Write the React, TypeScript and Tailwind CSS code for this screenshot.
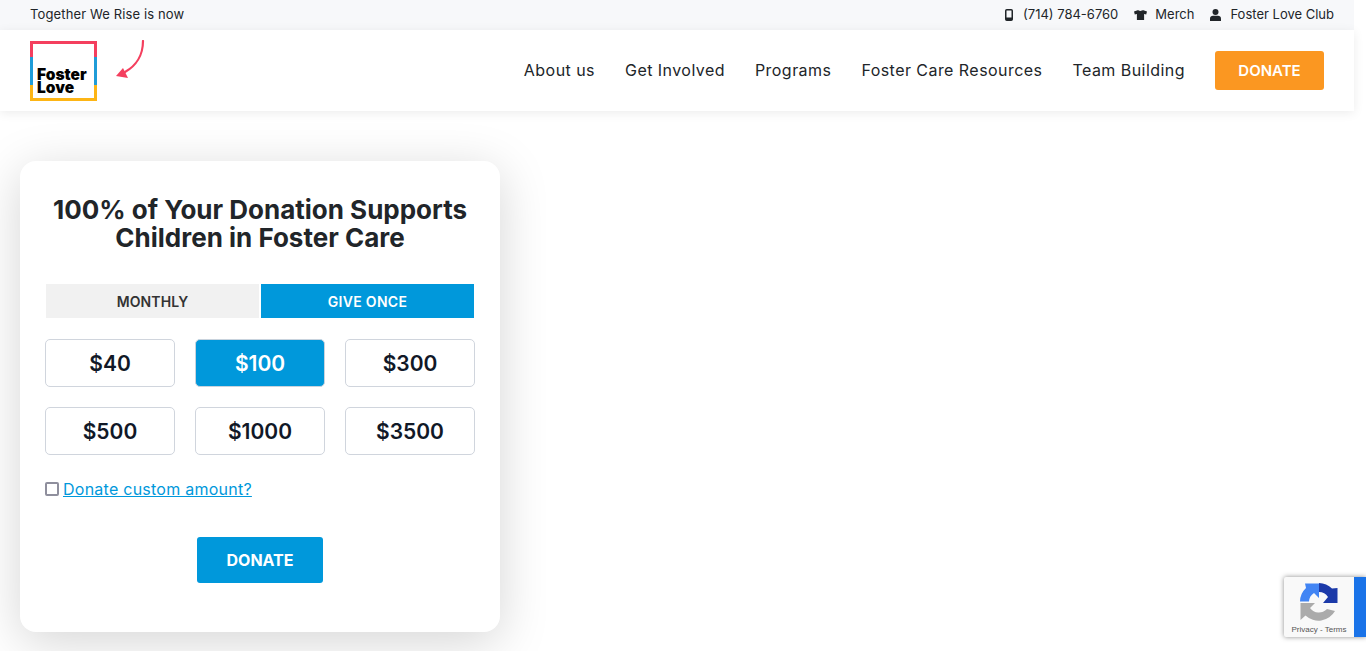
// Foster Love donation page

const navLinks = ['About us', 'Get Involved', 'Programs', 'Foster Care Resources', 'Team Building'];
const amounts = ['$40', '$100', '$300', '$500', '$1000', '$3500'];

function Logo() {
  return (
    <div className="relative w-[67px] h-[60px] flex flex-col justify-end pl-[7px] pb-[7px] bg-white">
      <span className="absolute left-0 top-0 w-full h-[16px] border-[3px] border-b-0 border-[#f43f5e]" />
      <span className="absolute left-0 top-[16px] w-full h-[28px] border-x-[3px] border-[#1f9cd8]" />
      <span className="absolute left-0 bottom-0 w-full h-[16px] border-[3px] border-t-0 border-[#fdb515]" />
      <p className="font-['Inter',sans-serif] font-black text-[15.5px] leading-[13px] text-black">
        Foster
        <br />
        Love
      </p>
    </div>
  );
}

function Arrow() {
  return (
    <svg width="32" height="40" viewBox="0 0 32 40" fill="none" className="ml-[17px] mt-[-1px] self-start">
      <path d="M29 1C29 15 22 26 11 32" stroke="#f43f5e" strokeWidth="2.2" strokeLinecap="round" />
      <path d="M2 36L9 28L14 38Z" fill="#f43f5e" />
    </svg>
  );
}

function PhoneIcon() {
  return (
    <svg width="8" height="12" viewBox="0 0 8 12" fill="none">
      <rect x="0.75" y="0.75" width="6.5" height="10.5" rx="1" stroke="#212529" strokeWidth="1.5" />
      <rect x="1" y="8.5" width="6" height="2.5" fill="#212529" />
    </svg>
  );
}

function ShirtIcon() {
  return (
    <svg width="13" height="10" viewBox="0 0 13 10" fill="#212529">
      <path d="M4.3 0L0 1.6L0.8 4.4L2.9 4V10H10.1V4L12.2 4.4L13 1.6L8.7 0C8.2 1.2 4.8 1.2 4.3 0Z" />
    </svg>
  );
}

function UserIcon() {
  return (
    <svg width="11" height="12" viewBox="0 0 11 12" fill="#212529">
      <circle cx="5.5" cy="3" r="3" />
      <path d="M0 12V9.5C0 7.8 1.3 6.8 3 6.8H8C9.7 6.8 11 7.8 11 9.5V12Z" />
    </svg>
  );
}

function RecaptchaMark() {
  return (
    <svg width="38" height="38" viewBox="0 0 38 38">
      <path d="M19 0A19 19 0 0 1 32 5.5L37.5 5V20H23L28 14A11 11 0 0 0 19 9Z" fill="#1c3aa9" />
      <path d="M0 18.5A19 19 0 0 1 6 5L5 0.5H19V15L14 10A11 11 0 0 0 9 18.5Z" fill="#4285f4" />
      <path d="M35 28A19 19 0 0 1 5.5 32.5L0.5 37V20H15L10 25A11 11 0 0 0 27 26Z" fill="#ababab" />
    </svg>
  );
}

function RecaptchaBadge() {
  return (
    <div className="absolute right-0 top-[577px] w-[82px] h-[60px] flex rounded-l-[2px] shadow-[0_0_5px_rgba(128,128,128,0.9)] bg-[#f9f9f9] overflow-hidden">
      <div className="w-[70px] flex flex-col items-center pt-[6px]">
        <RecaptchaMark />
        <span className="font-['Liberation_Sans',sans-serif] text-[8px] leading-[10px] mt-[4px] text-[#555]">Privacy - Terms</span>
      </div>
      <div className="w-[12px] bg-[#1a73e8]" />
    </div>
  );
}

export default function App() {
  return (
    <div className="relative h-[651px] overflow-hidden bg-white font-['Inter',sans-serif] text-[#212529]">
      <div className="w-[1354px]">
        {/* Top bar */}
        <div className="h-[30px] bg-[#f7f8fa] pl-[30px] pr-[20px] flex items-center justify-between text-[13px]">
          <span className="tracking-[0.13px]">Together We Rise is now</span>
          <div className="flex items-center gap-4">
            <span className="flex items-center gap-[10px]">
              <PhoneIcon />
              (714) 784-6760
            </span>
            <span className="flex items-center gap-2">
              <ShirtIcon />
              Merch
            </span>
            <span className="flex items-center gap-[9px]">
              <UserIcon />
              Foster Love Club
            </span>
          </div>
        </div>

        {/* Main nav */}
        <div className="h-[81px] px-[30px] flex items-center justify-between shadow-[0_2px_10px_rgba(0,0,0,0.08)]">
          <div className="flex items-center">
            <Logo />
            <Arrow />
          </div>
          <div className="flex items-center gap-[30px] text-[16px] tracking-[0.45px]">
            {navLinks.map((link) => (
              <span key={link} className="mb-[2px]">{link}</span>
            ))}
            <button className="w-[109px] h-[39px] pt-[2px] bg-[#fb9721] rounded-[3px] text-white font-semibold text-[15px] tracking-normal">
              DONATE
            </button>
          </div>
        </div>

        {/* Donation card, its shadow is cut off by the column */}
        <div className="w-[546px] h-[540px] overflow-hidden pl-[20px] pt-[50px]">
          <div className="w-[480px] h-[471px] bg-white rounded-[16px] shadow-[0_10px_50px_rgba(0,0,0,0.17)] px-[25px] pt-[35px]">
            <h1 className="text-[26px] leading-[28px] font-bold text-center text-[#212529]">
              100% of Your Donation Supports Children in Foster Care
            </h1>

            <div className="mt-[32px] flex gap-[2px] pl-[1px] pr-[1px]">
              <div className="flex-1 h-[34px] bg-[#f1f1f1] flex items-center justify-center text-[14px] font-semibold tracking-[0.1px] text-[#333]">
                MONTHLY
              </div>
              <div className="flex-1 h-[34px] bg-[#0098db] flex items-center justify-center text-[14px] font-semibold tracking-[0.3px] text-white">
                GIVE ONCE
              </div>
            </div>

            <div className="mt-[21px] grid grid-cols-3 gap-x-[20px] gap-y-[20px]">
              {amounts.map((amount) => (
                <button
                  key={amount}
                  className={
                    amount === '$100'
                      ? 'h-[48px] pt-[2px] rounded-[5px] border border-[#c9d3dd] bg-[#0098db] text-white text-[21px] font-semibold'
                      : 'h-[48px] pt-[2px] rounded-[5px] border border-[#d0d5dd] bg-white text-[#111827] text-[21px] font-semibold'
                  }
                >
                  {amount}
                </button>
              ))}
            </div>

            <div className="mt-[24px] h-[20px] flex items-center gap-[4px]">
              <span className="w-[14px] h-[14px] border-2 border-[#8f8f9d] rounded-[2px]" />
              <span className="text-[16px] tracking-[0.25px] text-[#0098db] underline">Donate custom amount?</span>
            </div>

            <div className="mt-[38px] flex justify-center">
              <button className="w-[126px] h-[46px] bg-[#0098db] rounded-[3px] text-white font-bold text-[16px]">
                DONATE
              </button>
            </div>
          </div>
        </div>
      </div>
      <RecaptchaBadge />
    </div>
  );
}
